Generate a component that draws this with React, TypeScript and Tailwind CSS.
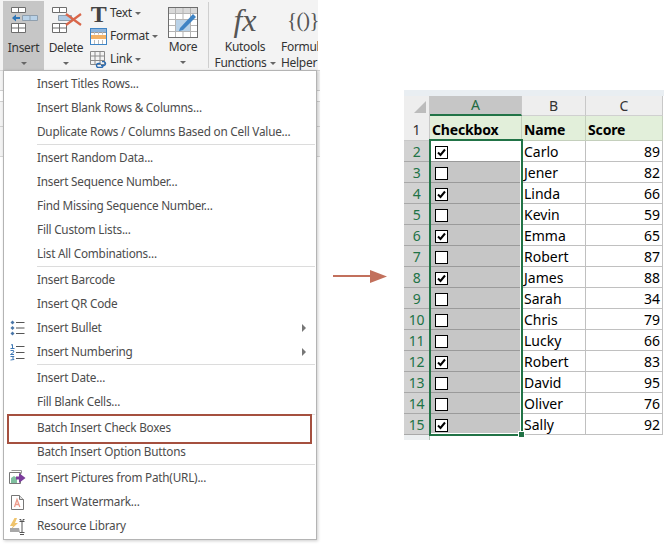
import React from "react";

const UI = "font-['Noto_Sans','Open_Sans',sans-serif]";

function Caret() {
  return <span className="block w-0 h-0 border-x-[3px] border-t-[3px] border-x-transparent border-t-[#666]" />;
}

function InsertIcon() {
  return (
    <svg width="28" height="28" viewBox="0 0 28 28" fill="none">
      <g stroke="#6e6e6e" strokeWidth="1">
        <path d="M1.5 1.5h14v5h-14zM8.5 1.5v5" fill="#fff" />
        <path d="M1.5 17.5h14v9h-14zM8.5 17.5v9M1.5 22h14" fill="#fff" />
      </g>
      <path d="M12.5 9.5h15v5h-15zM20 9.5v5" fill="#b9d2e8" stroke="#8f9fae" />
      <path d="M2 12l4-3.5v2.4h4v2.2H6v2.4z" fill="#2e75b6" />
    </svg>
  );
}

function DeleteIcon() {
  return (
    <svg width="32" height="28" viewBox="0 0 32 28" fill="none">
      <g stroke="#6e6e6e" strokeWidth="1">
        <path d="M1.5 1.5h14v5h-14zM8.5 1.5v5" fill="#fff" />
        <path d="M1.5 17.5h14v9h-14zM8.5 17.5v9M1.5 22h14" fill="#fff" />
      </g>
      <path d="M7.5 9.5h13v5h-13z" fill="#b0cbe4" stroke="#8f9fae" />
      <path d="M15 8l15 11M30 8L15 19" stroke="#d9664a" strokeWidth="2.2" />
    </svg>
  );
}

function FormatIcon() {
  return (
    <svg width="17" height="17" viewBox="0 0 17 17">
      <rect x="0.5" y="0.5" width="16" height="16" fill="#fff" stroke="#3f85c6" />
      <rect x="1" y="1" width="15" height="3" fill="#8db4dc" />
      <path d="M1 4.5h15M1 9.5h15" stroke="#9a9a9a" />
      <rect x="1" y="7" width="15" height="4" fill="#f4b266" />
      <path d="M4.5 4v2.5M8.5 4v2.5M12.5 4v2.5M4.5 12v4M8.5 12v4M12.5 12v4" stroke="#bbb" />
    </svg>
  );
}

function LinkIcon() {
  return (
    <svg width="17" height="17" viewBox="0 0 17 17" fill="none">
      <path d="M0.5 0.5h14v13h-14zM5 0.5v13M10 0.5v13M0.5 5h14M0.5 9.5h14" stroke="#8a8a8a" />
      <path d="M10.5 12.5H8.5a2 2 0 0 0 0 4h3a2 2 0 0 0 1.5-2.5M11 14.5h3a2 2 0 0 0 0-3.9h-2" stroke="#2b6cb3" strokeWidth="1.4" />
    </svg>
  );
}

function MoreIcon() {
  return (
    <svg width="30" height="31" viewBox="0 0 30 31" fill="none">
      <rect x="0.5" y="0.5" width="29" height="30" fill="#fff" stroke="#6e6e6e" />
      <rect x="1" y="1" width="28" height="5" fill="#d9d9d9" />
      <path d="M7.5 1v29M15 1v29M22.5 1v29M1 6.5h28M1 12.5h28M1 18.5h28M1 24.5h28" stroke="#b5b5b5" />
      <rect x="8" y="13" width="14" height="11" fill="#b9d2e8" />
      <path d="M12 21l13-14 3 3-13 13-4 1z" fill="#3e83c4" />
    </svg>
  );
}

function BulletIcon() {
  return (
    <svg width="15" height="16" viewBox="0 0 15 16">
      <path d="M2.5 0.5l2 2-2 2-2-2zM2.5 6l2 2-2 2-2-2zM2.5 11.5l2 2-2 2-2-2z" fill="#4a76a8" />
      <path d="M6 2.5h8.5M6 8h8.5M6 13.5h8.5" stroke="#555" />
    </svg>
  );
}

function NumberIcon() {
  return (
    <svg width="15" height="17" viewBox="0 0 15 17" fill="none">
      <path d="M1 1l1.5-.5v4M.5 4.5h4M.5 6.5h3l.3 1.5-3.3 2.5h3.5M.5 12.5h3.5l-1.5 1.5 1.5 1.5-3.5.5" stroke="#3f78b5" />
      <path d="M6 2.5h8.5M6 8.5h8.5M6 14.5h8.5" stroke="#555" />
    </svg>
  );
}

function PictureIcon() {
  return (
    <svg width="17" height="16" viewBox="0 0 17 16" fill="none">
      <path d="M.5 2.5h11v11H.5z" stroke="#777" fill="#fff" />
      <path d="M2.5 .5h10v3" stroke="#999" />
      <path d="M2 8l3-2 3 2v5H2z" fill="#7fbf9f" />
      <path d="M7 6.5h3V3l6.5 5-6.5 5V9.5H7z" fill="#7c3d9c" />
    </svg>
  );
}

function WatermarkIcon() {
  return (
    <svg width="13" height="15" viewBox="0 0 13 15" fill="none">
      <path d="M.5 .5h8l4 4v10H.5z" stroke="#777" fill="#fff" />
      <path d="M8.5 .5v4h4" stroke="#777" fill="#ddd" />
      <path d="M3.5 12L6 4.5 8.8 12M4.5 9.5h3.4" stroke="#ee9b8b" strokeWidth="1.3" />
    </svg>
  );
}

function LibraryIcon() {
  return (
    <svg width="17" height="17" viewBox="0 0 17 17" fill="none">
      <path d="M5.5 0L1 8h3L1.5 12 9 5H6l2-5z" fill="#f0c46c" />
      <path d="M1 10h9l1 4H1z" fill="#a8a8a8" />
      <path d="M10.5 3.5h5M13 3.5v11M10.5 14.5h5M10.5 1.5h1.5v2M15.5 1.5H14v2" stroke="#555" />
      <path d="M11 16.5h4" stroke="#555" />
    </svg>
  );
}

type Item = { t: string; icon?: React.ReactNode; sub?: boolean; hi?: boolean } | "sep";

const menu: Item[] = [
  { t: "Insert Titles Rows..." },
  { t: "Insert Blank Rows & Columns..." },
  { t: "Duplicate Rows / Columns Based on Cell Value..." },
  "sep",
  { t: "Insert Random Data..." },
  { t: "Insert Sequence Number..." },
  { t: "Find Missing Sequence Number..." },
  { t: "Fill Custom Lists..." },
  { t: "List All Combinations..." },
  "sep",
  { t: "Insert Barcode" },
  { t: "Insert QR Code" },
  { t: "Insert Bullet", icon: <BulletIcon />, sub: true },
  { t: "Insert Numbering", icon: <NumberIcon />, sub: true },
  "sep",
  { t: "Insert Date..." },
  { t: "Fill Blank Cells..." },
  "sep",
  { t: "Batch Insert Check Boxes", hi: true },
  { t: "Batch Insert Option Buttons" },
  "sep",
  { t: "Insert Pictures from Path(URL)...", icon: <PictureIcon /> },
  { t: "Insert Watermark...", icon: <WatermarkIcon /> },
  { t: "Resource Library", icon: <LibraryIcon /> },
];

const rows: [boolean, string, number][] = [
  [true, "Carlo", 89],
  [false, "Jener", 82],
  [true, "Linda", 66],
  [false, "Kevin", 59],
  [true, "Emma", 65],
  [false, "Robert", 87],
  [true, "James", 88],
  [false, "Sarah", 34],
  [false, "Chris", 79],
  [false, "Lucky", 66],
  [true, "Robert", 83],
  [false, "David", 95],
  [false, "Oliver", 76],
  [true, "Sally", 92],
];

function Ribbon() {
  return (
    <div className={`flex h-[70px] w-[318px] overflow-hidden bg-[#f3f3f3] text-[12px] leading-[14px] tracking-[-0.3px] text-[#333] ${UI}`}>
      <div className="ml-[3px] mt-px flex w-[41px] flex-col items-center bg-[#c6c6c6] pt-[5px]">
        <div className="ml-px"><InsertIcon /></div>
        <span className="mt-[7px]">Insert</span>
        <span className="mt-[7px]"><Caret /></span>
      </div>
      <div className="flex w-[44px] flex-col items-center pt-[6px]">
        <div className="ml-[2px]"><DeleteIcon /></div>
        <span className="mt-[7px]">Delete</span>
        <span className="mt-[7px]"><Caret /></span>
      </div>
      <div className="ml-[2px] flex w-[75px] flex-col pt-[1px]">
        <div className="flex h-[24px] items-center gap-[3px]">
          <span className="w-[17px] pt-[2px] text-center font-['Liberation_Serif',serif] text-[24px] font-bold leading-[22px] text-[#444]">T</span>
          <span>Text</span>
          <Caret />
        </div>
        <div className="flex h-[22px] items-center gap-[3px]">
          <FormatIcon />
          <span>Format</span>
          <Caret />
        </div>
        <div className="mt-[1px] flex h-[22px] items-center gap-[3px]">
          <LinkIcon />
          <span>Link</span>
          <Caret />
        </div>
      </div>
      <div className="flex w-[36px] flex-col items-center pt-[7px]">
        <MoreIcon />
        <span className="mt-[2px]">More</span>
        <span className="mt-[7px]"><Caret /></span>
      </div>
      <div className="ml-[7px] mr-[6px] mt-[2px] h-[66px] w-px bg-[#cfcfcf]" />
      <div className="flex w-[60px] flex-col items-center pt-[2px]">
        <span className="font-['Liberation_Serif',serif] text-[32px] italic leading-[36px] tracking-normal text-[#555]">fx</span>
        <span className="mt-[2px]">Kutools</span>
        <span className="mt-[2px] flex items-center gap-[3px]">Functions<Caret /></span>
      </div>
      <div className="ml-[6px] flex w-[37px] shrink-0 flex-col items-start pt-[6px]">
        <span className="ml-[6px] whitespace-nowrap font-['Liberation_Serif',serif] text-[21px] leading-[28px] tracking-[-0.5px] text-[#555]">{"{()}"}</span>
        <span className="mt-[6px] whitespace-nowrap">Formula</span>
        <span className="mt-[2px]">Helper</span>
      </div>
    </div>
  );
}

function Menu() {
  return (
    <div className={`relative ml-[3px] w-[314px] border border-[#b4b4b4] bg-white py-px text-[11.75px] text-[#4c4c4c] shadow-[1px_1px_3px_rgba(0,0,0,0.2)] ${UI}`}>
      {menu.map((m, i) =>
        m === "sep" ? (
          <div key={i} className="ml-[33px] mr-px h-[2px] border-t border-[#dcdcdc]" />
        ) : (
          <div key={i} className="relative flex h-6 items-center">
            <span className="flex w-[33px] shrink-0 justify-center pr-[7px]">{m.icon}</span>
            <span className="whitespace-nowrap tracking-[-0.22px]">{m.t}</span>
            {m.sub && (
              <span className="absolute right-[10px] h-0 w-0 border-y-[4px] border-l-[4px] border-y-transparent border-l-[#777]" />
            )}
            {m.hi && (
              <span className="absolute -bottom-[4px] -top-[2px] left-[3px] right-[4px] border-2 border-[#a5503f]" />
            )}
          </div>
        )
      )}
    </div>
  );
}

function Check({ on }: { on: boolean }) {
  return (
    <span className="mt-[2px] flex h-[13px] w-[13px] items-center justify-center border border-black bg-white">
      {on && (
        <svg width="9" height="9" viewBox="0 0 9 9" fill="none">
          <path d="M1 4.5l2.5 2.5L8 1.5" stroke="#000" strokeWidth="2" />
        </svg>
      )}
    </span>
  );
}

function Sheet() {
  const head = "flex items-center justify-center border-r border-[#c8c8c8] text-[14px] h-[20px]";
  return (
    <div className={`relative w-[260px] text-[14px] leading-none text-black ${UI}`}>
      <div className="h-[6px] bg-[#e9eef2]" />
      <div className="grid grid-cols-[26px_92px_64px_77px]">
        <div className="flex h-[20px] items-end justify-end border-r border-[#c8c8c8] bg-[#eeeeee] pb-[3px] pr-[3px]">
          <svg width="12" height="12" viewBox="0 0 12 12"><path d="M12 0v12H0z" fill="#bcbcbc" /></svg>
        </div>
        <div className={`${head} border-b-2 border-b-[#217346] bg-[#c6c6c6] text-[#1f6b42]`}>A</div>
        <div className={`${head} border-b border-b-[#d0d0d0] bg-[#eeeeee] text-[#333]`}>B</div>
        <div className={`${head} border-b border-b-[#d0d0d0] bg-[#eeeeee] text-[#333]`}>C</div>

        <div className="flex h-[25px] items-center justify-center border-r border-b border-[#c8c8c8] bg-[#eeeeee] pt-[4px] text-[#333]">1</div>
        {["Checkbox", "Name", "Score"].map((h) => (
          <div key={h} className="flex h-[25px] items-center border-r border-b border-[#c4cfbc] bg-[#e2efda] pl-[2px] pt-[4px] font-bold tracking-[-0.15px]">{h}</div>
        ))}

        {rows.map(([on, name, score], i) => (
          <React.Fragment key={i}>
            <div className="flex h-[21px] items-center justify-center border-b border-r border-[#a9a9a9] bg-[#d2d2d2] pt-[2px] tracking-[-0.3px] text-[#217346]">{i + 2}</div>
            <div className={`flex h-[21px] items-center border-b border-[#9a9a9a] pl-[5px] ${i === 0 ? "bg-white" : "bg-[#c6c6c6]"}`}>
              <Check on={on} />
            </div>
            <div className="flex h-[21px] items-center border-b border-r border-[#c0c0c0] pl-[2px] pt-[2px]">{name}</div>
            <div className="flex h-[21px] items-center justify-end border-b border-r border-[#c0c0c0] pr-[2px] pt-[2px]">{score}</div>
          </React.Fragment>
        ))}
        <div className="h-[5px] border-r border-[#b0c4b8] bg-[#eceff1]" />
      </div>
      <div className="absolute left-[25px] top-[49px] h-[297px] w-[94px] border-2 border-[#217346] shadow-[inset_-1px_-1px_0_#fff]" />
      <div className="absolute left-[115px] top-[342px] h-[5px] w-[5px] bg-[#217346] outline outline-1 outline-white" />
    </div>
  );
}

export default function App() {
  return (
    <div className="flex h-[544px] w-[666px] overflow-hidden bg-white">
      <div className="relative w-[320px] shrink-0">
        <div className="absolute left-0 top-[70px] h-[87px] w-[320px] border-y border-[#d6d6d6] bg-[#f3f3f3]">
          <div className="mt-[19px] h-[12px] border-y border-[#d0d0d0] bg-white" />
          <div className="mt-[24px] h-px bg-[#d0d0d0]" />
        </div>
        <div className="relative">
          <Ribbon />
          <Menu />
        </div>
      </div>
      <div className="w-[84px] shrink-0 pl-[13px] pt-[269px]">
        <svg width="56" height="16" viewBox="0 0 56 16">
          <path d="M0 7h38" stroke="#c2705c" strokeWidth="2" />
          <path d="M37 1l17 6.5L37 14z" fill="#c2705c" />
        </svg>
      </div>
      <div className="pt-[90px]">
        <Sheet />
      </div>
    </div>
  );
}
